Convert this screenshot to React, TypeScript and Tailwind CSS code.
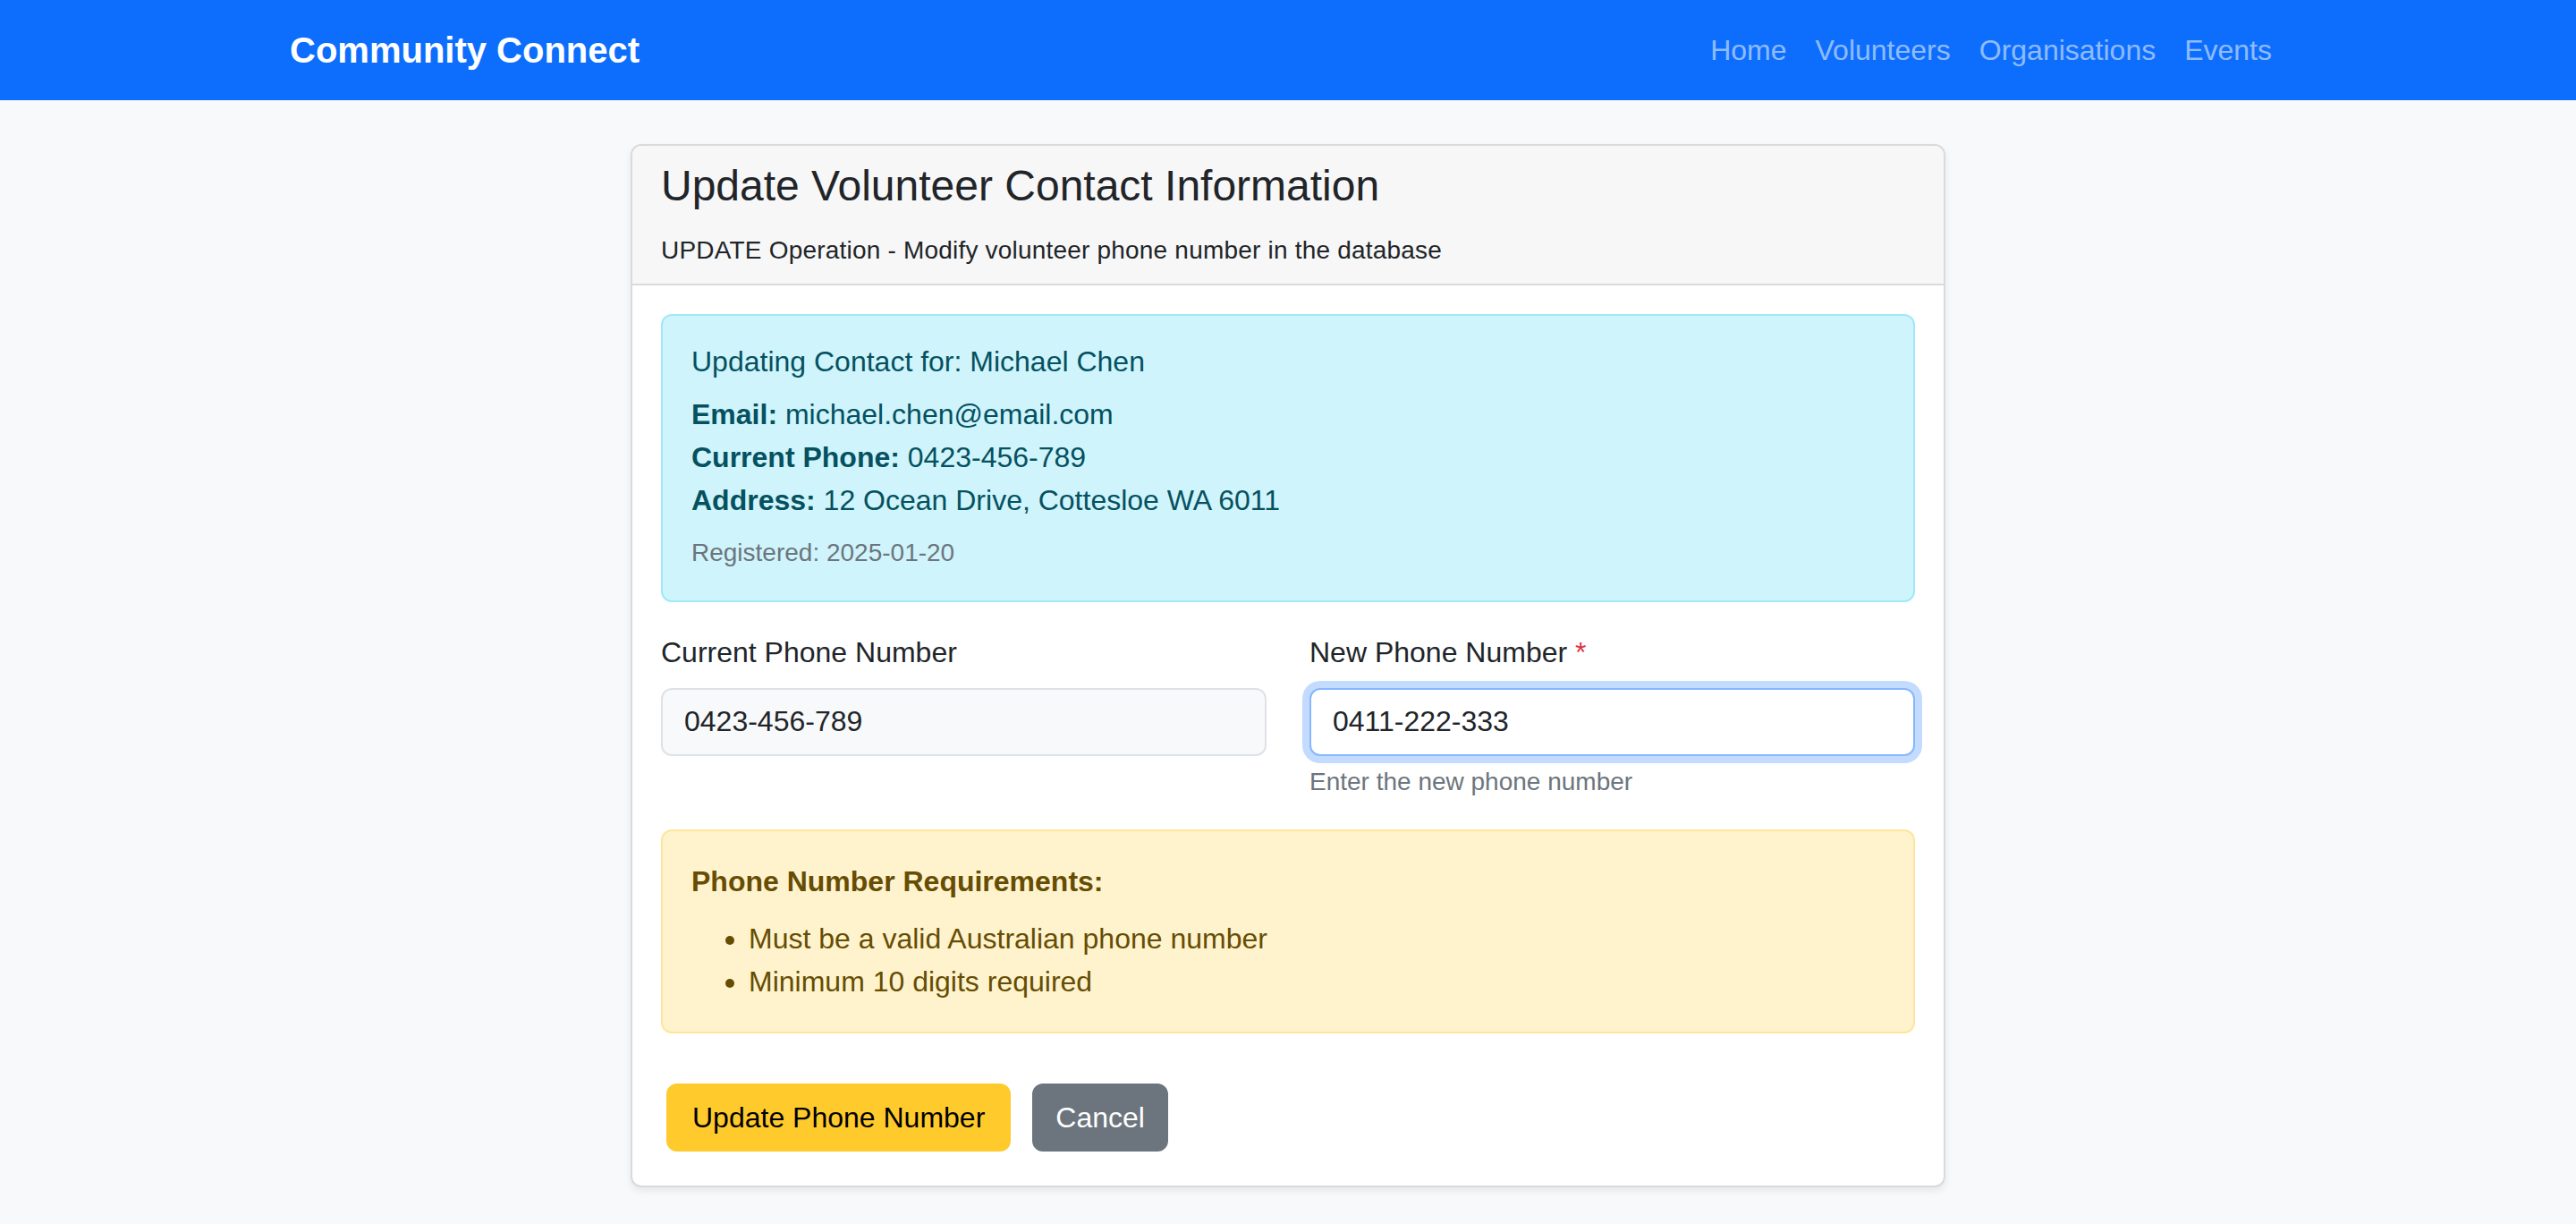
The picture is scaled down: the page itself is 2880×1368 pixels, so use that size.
export default function App() {
  const links = ['Home', 'Volunteers', 'Organisations', 'Events']

  return (
    <div className="min-h-screen bg-[#f8f9fa] font-['Liberation_Sans',Arial,sans-serif] text-[32px] leading-[1.5] text-[#212529]">
      {/* Navbar */}
      <nav className="h-[112px] bg-[#0d6efd]">
        <div className="mx-auto flex h-full w-[2280px] items-center justify-between px-[24px]">
          <a className="text-[40px] font-bold text-white">Community Connect</a>
          <ul className="flex">
            {links.map((l) => (
              <li key={l}>
                <a className="px-[16px] text-[32px] text-[rgba(255,255,255,0.55)]">{l}</a>
              </li>
            ))}
          </ul>
        </div>
      </nav>

      <div className="mx-auto w-[2280px] px-[24px] pt-[49px] pb-[40px]">
        <div className="mx-auto w-[1470px] overflow-hidden rounded-[12px] border-2 border-[#dadada] bg-white shadow-[0_4px_8px_rgba(0,0,0,0.075)]">
          {/* Header */}
          <div className="border-b-2 border-[#dadada] bg-[#f7f7f7] px-[32px] pt-[16px] pb-[16px]">
            <h4 className="mb-[22px] text-[48px] leading-[1.2] font-medium">Update Volunteer Contact Information</h4>
            <p className="text-[28px] leading-[42px] tracking-[0.2px]">UPDATE Operation - Modify volunteer phone number in the database</p>
          </div>

          {/* Body */}
          <div className="px-[32px] pt-[32px] pb-[38px]">
            <div className="mb-[32px] rounded-[12px] border-2 border-[#9eeaf9] bg-[#cff4fc] p-[32px] text-[#055160]">
              <h6 className="mb-[16px] text-[32px] leading-[1.2] font-medium">Updating Contact for: Michael Chen</h6>
              <p className="mb-[14px]">
                <strong>Email:</strong> michael.chen@email.com
                <br />
                <strong>Current Phone:</strong> 0423-456-789
                <br />
                <strong>Address:</strong> 12 Ocean Drive, Cottesloe WA 6011
              </p>
              <p className="text-[28px] leading-[42px] text-[#6c757d]">Registered: 2025-01-20</p>
            </div>

            <div className="mb-[32px] grid grid-cols-2 gap-x-[48px]">
              <div>
                <label className="mb-[16px] block">Current Phone Number</label>
                <input
                  readOnly
                  defaultValue="0423-456-789"
                  className="block h-[76px] w-full rounded-[12px] border-2 border-[#dee2e6] bg-[#f8f9fa] px-[24px] text-[32px] text-[#212529] outline-none"
                />
              </div>
              <div>
                <label className="mb-[16px] block">
                  New Phone Number <span className="text-[#dc3545]">*</span>
                </label>
                <input
                  readOnly
                  defaultValue="0411-222-333"
                  className="block h-[76px] w-full rounded-[12px] border-2 border-[#86b7fe] bg-white px-[24px] text-[32px] text-[#212529] shadow-[0_0_0_8px_rgba(13,110,253,0.25)] outline-none"
                />
                <div className="mt-[8px] text-[28px] leading-[42px] text-[#6c757d]">Enter the new phone number</div>
              </div>
            </div>

            <div className="rounded-[12px] border-2 border-[#ffe69c] bg-[#fff3cd] p-[32px] text-[#664d03]">
              <p className="mb-[16px]">
                <strong>Phone Number Requirements:</strong>
              </p>
              <ul className="list-disc pl-[64px]">
                <li>Must be a valid Australian phone number</li>
                <li>Minimum 10 digits required</li>
              </ul>
            </div>

            <div className="mt-[56px] ml-[6px] flex gap-[24px]">
              <button className="h-[76px] rounded-[12px] border-2 border-[#ffca2c] bg-[#ffca2c] px-[27px] text-[32px] text-black">
                Update Phone Number
              </button>
              <button className="h-[76px] rounded-[12px] border-2 border-[#6c757d] bg-[#6c757d] px-[24px] text-[32px] text-white">
                Cancel
              </button>
            </div>
          </div>
        </div>
      </div>
    </div>
  )
}
